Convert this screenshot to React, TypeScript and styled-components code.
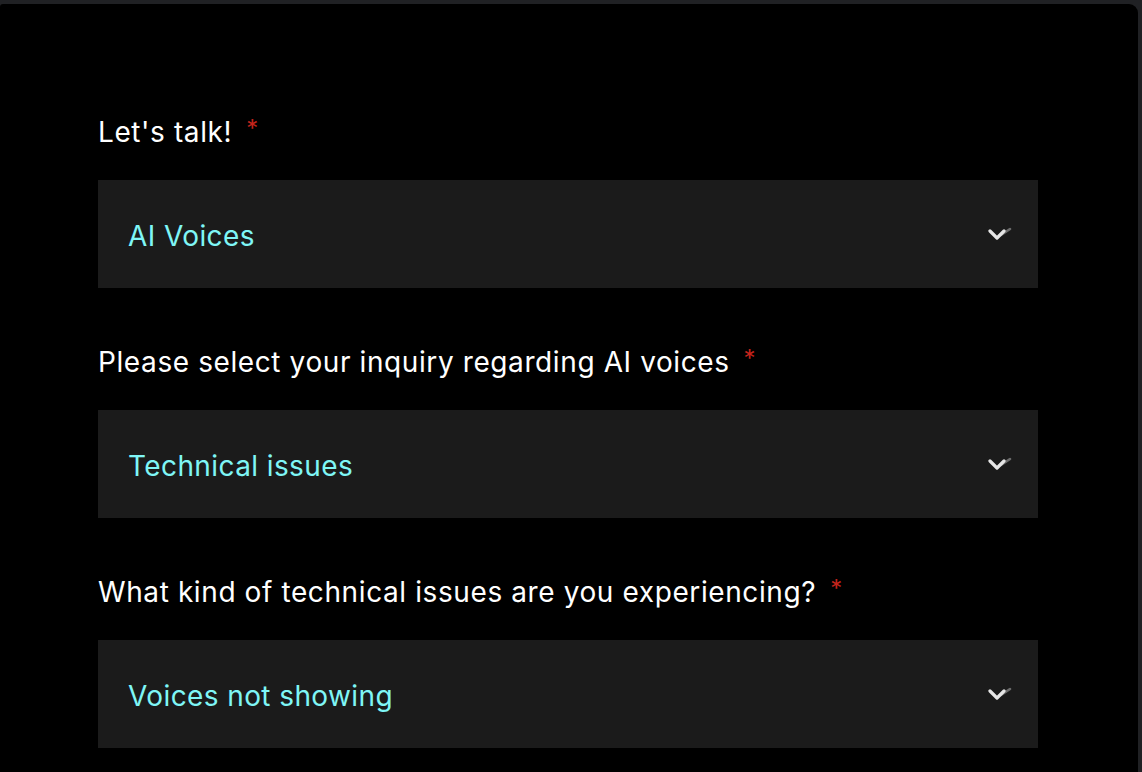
import React from 'react'
import styled, { createGlobalStyle } from 'styled-components'

const GlobalStyle = createGlobalStyle`
    html, body {
        margin: 0;
        padding: 0;
        background: #202124;
    }
    body {
        font-family: Inter, "Noto Sans", "Liberation Sans", sans-serif;
    }
`

const Frame = styled.div`
    padding: 4px 4px 0 0;
    height: 772px;
    box-sizing: border-box;
    overflow: hidden;
`

const Panel = styled.div`
    background: #000;
    height: 100%;
    border-radius: 3px 9px 0 0;
    padding: 112px 0 0 98px;
    box-sizing: border-box;
`

const Form = styled.form`
    width: 940px;
    display: flex;
    flex-direction: column;
    gap: 58px;
`

const Field = styled.div`
    display: flex;
    flex-direction: column;
    gap: 32px;
`

const Label = styled.label`
    color: #fff;
    font-size: 28px;
    line-height: 32px;
    height: 32px;
    display: flex;
    align-items: center;
    letter-spacing: 0.6px;
`

const Required = styled.span`
    color: #c4241c;
    font-size: 24px;
    margin-left: 14px;
    position: relative;
    top: -3px;
`

const Select = styled.div`
    height: 108px;
    background: #1b1b1b;
    display: flex;
    align-items: center;
    justify-content: space-between;
    padding: 3px 24px 0 30px;
    box-sizing: border-box;
    cursor: pointer;
`

const Value = styled.span`
    color: #7ff6f6;
    font-size: 28px;
    letter-spacing: 0.4px;
`

const Chevron = () => (
    <svg width="26" height="18" viewBox="0 0 26 18" fill="none">
        <path d="M13 8 L22 2" stroke="#6c6c6c" strokeWidth="2.6" strokeLinecap="round" />
        <path d="M2 4 L9 11 L16 4" stroke="#e6e6e6" strokeWidth="3.2" strokeLinecap="round" strokeLinejoin="round" />
    </svg>
)

const fields = [
    { label: "Let's talk!", value: 'AI Voices' },
    { label: 'Please select your inquiry regarding AI voices', value: 'Technical issues' },
    { label: 'What kind of technical issues are you experiencing?', value: 'Voices not showing' },
]

const App: React.FC = () => {
    return (
        <>
            <GlobalStyle />
            <Frame>
                <Panel>
                    <Form>
                        {fields.map(({ label, value }) =>
                            <Field key={label}>
                                <Label>
                                    {label}
                                    <Required>*</Required>
                                </Label>
                                <Select>
                                    <Value>{value}</Value>
                                    <Chevron />
                                </Select>
                            </Field>
                        )}
                    </Form>
                </Panel>
            </Frame>
        </>
    )
}

export default App
